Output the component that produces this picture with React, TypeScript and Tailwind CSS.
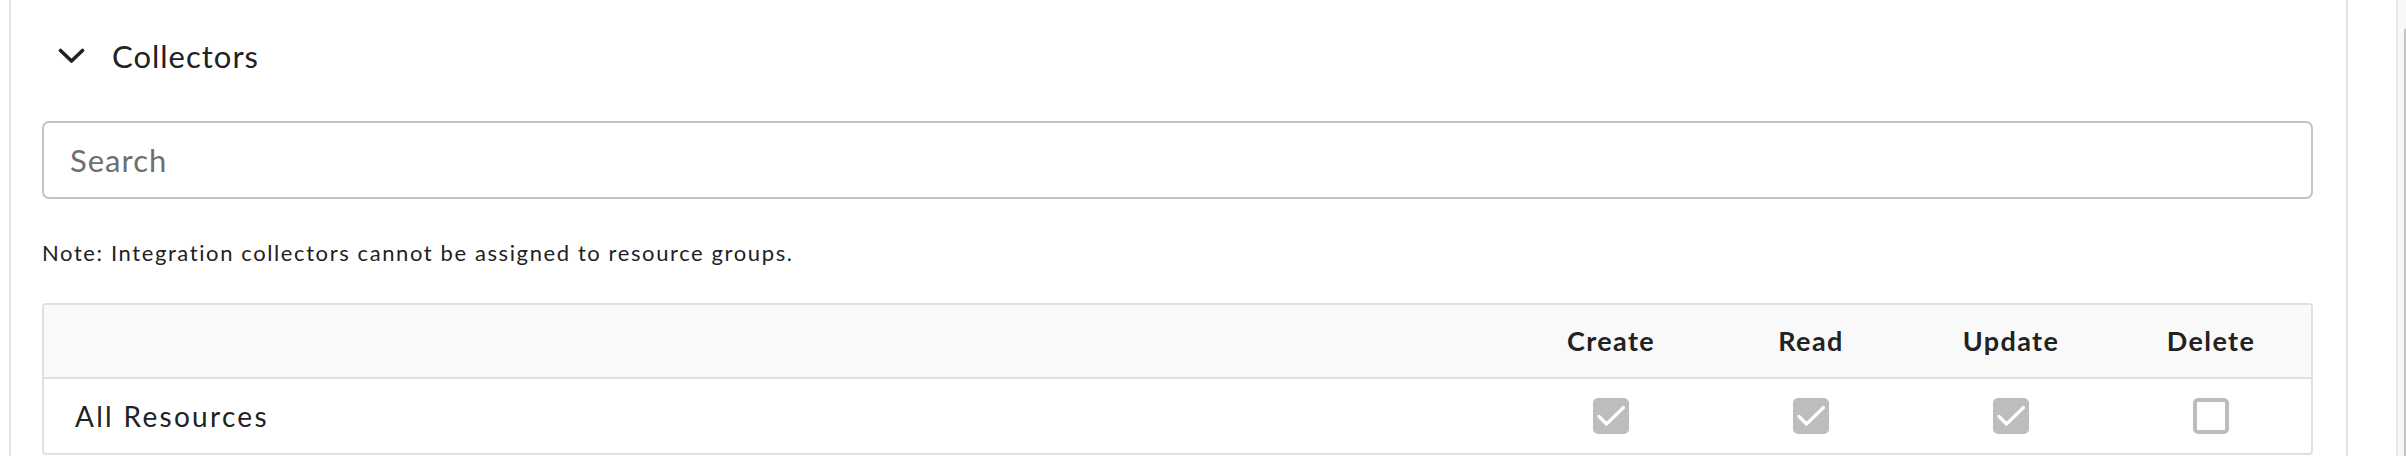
import React from "react";

const columns = ["Create", "Read", "Update", "Delete"];

function Check({ checked }: { checked: boolean }) {
    if (!checked) {
        return <div className="h-[36px] w-[36px] rounded-[5px] border-[4px] border-[#bdbdbd] bg-white" />;
    }
    return (
        <div className="h-[36px] w-[36px] rounded-[5px] bg-[#bdbdbd]">
            <svg width="36" height="36" viewBox="0 0 36 36" fill="none">
                <path d="M6 18.5 L13.5 26 L30.5 9.5" stroke="#ffffff" strokeWidth="3.2" strokeLinecap="round" strokeLinejoin="round" />
            </svg>
        </div>
    );
}

export default function App() {
    const row = { name: "All Resources", perms: [true, true, true, false] };

    return (
        <div className="flex h-[456px] w-full overflow-hidden bg-white font-['Lato','Noto_Sans',sans-serif] text-[#222]">
            <div className="ml-[9px] w-[2339px] shrink-0 border-x-2 border-[#e2e2e2] pl-[31px] pr-[33px]">
                <div className="flex h-[112px] items-center">
                    <svg className="ml-[16px]" width="27" height="16" viewBox="0 0 27 16" fill="none">
                        <path d="M2.5 2.5 L13.5 13 L24.5 2.5" stroke="#222" strokeWidth="3.6" strokeLinecap="round" strokeLinejoin="round" />
                    </svg>
                    <span className="ml-[27px] text-[31px] leading-none tracking-[1px]">Collectors</span>
                </div>

                <div className="mt-[9px] flex h-[78px] items-center rounded-[7px] border-2 border-[#c4c4c4] px-[26px]">
                    <input
                        placeholder="Search"
                        className="w-full bg-transparent text-[31px] tracking-[1px] text-[#222] outline-none placeholder:text-[#6f6f6f]"
                    />
                </div>

                <p className="mt-[39px] text-[22px] leading-[30px] tracking-[1.6px]">
                    Note: Integration collectors cannot be assigned to resource groups.
                </p>

                <div className="mt-[35px] rounded-[4px] border-2 border-[#e0e0e0]">
                    <div className="flex h-[74px] items-center border-b-2 border-[#e0e0e0] bg-[#f9f9f9]">
                        <div className="flex-1" />
                        {columns.map((c) => (
                            <div key={c} className="w-[200px] text-center text-[27px] font-bold tracking-[1.4px]">
                                {c}
                            </div>
                        ))}
                    </div>
                    <div className="flex h-[74px] items-center">
                        <div className="flex-1 pl-[31px] text-[28px] tracking-[2.3px]">{row.name}</div>
                        {row.perms.map((p, i) => (
                            <div key={columns[i]} className="flex w-[200px] justify-center">
                                <Check checked={p} />
                            </div>
                        ))}
                    </div>
                </div>
            </div>

            <div className="ml-[48px] flex w-[10px] shrink-0 border-l-2 border-[#e8e8e8] bg-[#f7f7f7]">
                <div className="ml-[6px] mt-[29px] w-[2px] bg-[#c2c2c2]" />
            </div>
        </div>
    );
}
